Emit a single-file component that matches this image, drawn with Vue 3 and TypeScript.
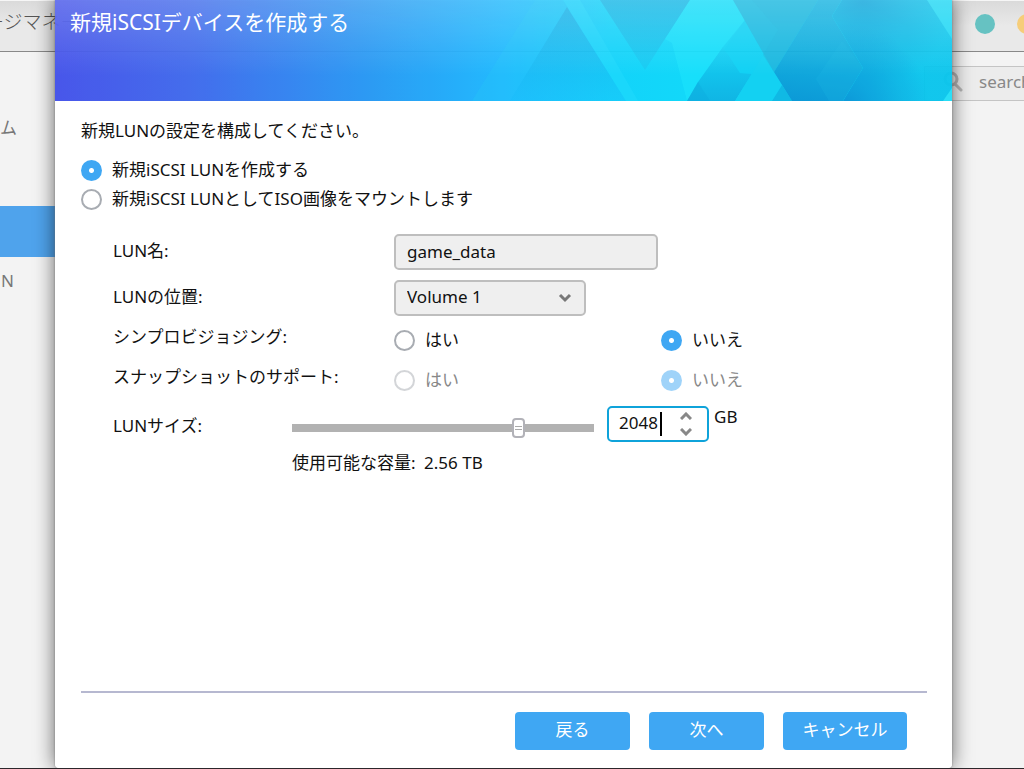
<script setup lang="ts">
import { ref } from 'vue'

const source = ref<'create' | 'mount'>('create')
const lunName = ref('game_data')
const location = ref('Volume 1')
const thin = ref<'yes' | 'no'>('no')
const snapshot = ref<'yes' | 'no'>('no')
const size = ref(2048)
const maxSize = 2684

function step(delta: number) {
  size.value = Math.min(maxSize, Math.max(1, Number(size.value) + delta))
}
</script>

<template>
  <div class="page">
    <div class="shell">
      <header class="titlebar">
        <span class="app-name">ージマネー</span>
        <span class="window-dots">
          <button type="button" class="dot teal" aria-label="最小化"></button>
          <button type="button" class="dot yellow" aria-label="最大化"></button>
        </span>
      </header>
      <div class="workspace">
        <nav class="sidebar">
          <a href="#" class="item">ム</a>
          <a href="#" class="item active" aria-label="iSCSI"></a>
          <a href="#" class="item latin">N</a>
        </nav>
        <div class="searchbar">
          <svg viewBox="0 0 20 22" class="magnifier" aria-hidden="true">
            <circle cx="8" cy="8" r="6" fill="none" stroke="#b5b5b5" stroke-width="3" />
            <path d="M12 13l6 6" stroke="#b5b5b5" stroke-width="3" stroke-linecap="round" />
          </svg>
          <input type="text" class="search" placeholder="search" aria-label="search" />
        </div>
      </div>
    </div>

    <section class="dialog" role="dialog" aria-labelledby="dialog-title">
      <header class="banner">
        <svg class="art" viewBox="0 0 897 101" preserveAspectRatio="none" aria-hidden="true">
          <defs>
            <linearGradient id="base" x1="0" x2="1" y1="0" y2="0">
              <stop offset="0" stop-color="#3f4eea" />
              <stop offset="0.15" stop-color="#3b66ec" />
              <stop offset="0.34" stop-color="#2394f3" />
              <stop offset="0.5" stop-color="#17b7ff" />
              <stop offset="0.62" stop-color="#08d2fb" />
              <stop offset="0.72" stop-color="#06d8fa" />
              <stop offset="1" stop-color="#05d4f4" />
            </linearGradient>
            <linearGradient id="shine" x1="0" x2="0" y1="0" y2="1">
              <stop offset="0" stop-color="#fff" stop-opacity="0.2" />
              <stop offset="0.75" stop-color="#fff" stop-opacity="0" />
            </linearGradient>
            <linearGradient id="peak" x1="0" x2="0" y1="0" y2="1">
              <stop offset="0" stop-color="#0fa9e2" stop-opacity="0.75" />
              <stop offset="1" stop-color="#10c0fa" stop-opacity="0.45" />
            </linearGradient>
            <linearGradient id="dip" x1="0" x2="0" y1="0" y2="1">
              <stop offset="0" stop-color="#0cb0e4" stop-opacity="0.85" />
              <stop offset="1" stop-color="#0cc4f0" stop-opacity="0.6" />
            </linearGradient>
            <linearGradient id="pool" x1="0" x2="0" y1="0" y2="1">
              <stop offset="0" stop-color="#08d0f4" />
              <stop offset="1" stop-color="#04b2e4" />
            </linearGradient>
            <linearGradient id="deep" gradientUnits="userSpaceOnUse" x1="760" x2="745" y1="0" y2="101">
              <stop offset="0" stop-color="#0cb2e2" />
              <stop offset="0.5" stop-color="#07addf" />
              <stop offset="1" stop-color="#0096d6" />
            </linearGradient>
            <radialGradient id="low" gradientUnits="userSpaceOnUse" cx="790" cy="108" r="85">
              <stop offset="0" stop-color="#0092d6" />
              <stop offset="1" stop-color="#0092d6" stop-opacity="0" />
            </radialGradient>
            <radialGradient id="high" gradientUnits="userSpaceOnUse" cx="808" cy="0" r="90">
              <stop offset="0" stop-color="#0098d6" stop-opacity="0.8" />
              <stop offset="1" stop-color="#0aa8dc" stop-opacity="0.2" />
            </radialGradient>
          </defs>
          <rect width="897" height="101" fill="url(#base)" />
          <path d="M480 0H508L512 7L455 101H417Z" fill="#1cc6fa" opacity="0.3" />
          <path d="M512 7L455 101H571Z" fill="url(#peak)" />
          <path d="M508 0H525L583 101H571Z" fill="#1cdcff" opacity="0.4" />
          <path d="M545 0L590 70L635 0Z" fill="url(#dip)" />
          <path d="M635 0H678L690 20L632 101L617 43L610 39Z" fill="#16e8ff" opacity="0.4" />
          <path d="M668 47L632 101H717L719 72L710 52L690 20Z" fill="#05ccf2" opacity="0.6" />
          <path d="M643 82L668 47L685 73L697 74L680 101H632Z" fill="url(#pool)" />
          <path d="M643 82L655 101H632Z" fill="#00a8df" opacity="0.4" />
          <path d="M710 52L680 101H717L727 85L719 72Z" fill="#08d0f2" />
          <path d="M717 101L727 85L737 101Z" fill="#04b6e4" />
          <path d="M678 0H763L719 72Z" fill="#10b9e2" />
          <path d="M697 0H763L719 72L708 55L723 30Z" fill="#10b4de" opacity="0.5" />
          <path d="M763 0H787L777 16L808 68L788 101H737L719 72Z" fill="url(#deep)" />
          <path d="M787 0H897V101H788L808 68L777 16Z" fill="#06cdf2" />
          <path d="M787 0H897V101H788L808 68L777 16Z" fill="url(#high)" />
          <path d="M787 0H897V101H788L808 68L777 16Z" fill="url(#low)" />
          <path d="M787 41L808 68L788 101H774L761 79Z" fill="#14b8e8" opacity="0.2" />
          <path d="M872 0H897V39Z" fill="#18d8f6" />
          <path d="M897 88V101H888Z" fill="#20dff8" />
          <rect width="897" height="101" fill="url(#shine)" />
        </svg>
        <h1 id="dialog-title">新規iSCSIデバイスを作成する</h1>
      </header>

      <form class="content" @submit.prevent>
        <p class="intro">新規LUNの設定を構成してください。</p>
        <div class="sources">
          <label class="choice"><input v-model="source" type="radio" name="source" value="create" />新規iSCSI LUNを作成する</label>
          <label class="choice"><input v-model="source" type="radio" name="source" value="mount" />新規iSCSI LUNとしてISO画像をマウントします</label>
        </div>

        <div class="fields">
          <div class="row">
            <label class="name" for="lun-name">LUN名:</label>
            <input id="lun-name" v-model="lunName" type="text" class="box" />
          </div>
          <div class="row location-row">
            <label class="name" for="lun-location">LUNの位置:</label>
            <span class="select-wrap">
              <select id="lun-location" v-model="location" class="box">
                <option>Volume 1</option>
              </select>
              <svg viewBox="0 0 14 10" class="chevron" aria-hidden="true">
                <path d="M2 2l5 5 5-5" fill="none" stroke="#777" stroke-width="3" />
              </svg>
            </span>
          </div>
          <div class="row options" role="radiogroup" aria-labelledby="thin-label">
            <span id="thin-label" class="name">シンプロビジョジング:</span>
            <label class="choice"><input v-model="thin" type="radio" name="thin" value="yes" />はい</label>
            <label class="choice"><input v-model="thin" type="radio" name="thin" value="no" />いいえ</label>
          </div>
          <div class="row options" role="radiogroup" aria-labelledby="snap-label">
            <span id="snap-label" class="name">スナップショットのサポート:</span>
            <label class="choice off"><input v-model="snapshot" type="radio" name="snapshot" value="yes" disabled />はい</label>
            <label class="choice off"><input v-model="snapshot" type="radio" name="snapshot" value="no" disabled />いいえ</label>
          </div>
          <div class="row size-row">
            <label class="name" for="lun-size">LUNサイズ:</label>
            <input v-model.number="size" type="range" class="slider" min="1" :max="maxSize" aria-label="LUNサイズ" />
            <div class="spinner">
              <input id="lun-size" v-model="size" type="text" inputmode="numeric" class="number" />
              <span class="caret"></span>
              <span class="steps">
                <button type="button" aria-label="増やす" @click="step(1)">
                  <svg viewBox="0 0 12 8"><path d="M1 7l5-5 5 5" fill="none" stroke="#888" stroke-width="3" /></svg>
                </button>
                <button type="button" aria-label="減らす" @click="step(-1)">
                  <svg viewBox="0 0 12 8"><path d="M1 1l5 5 5-5" fill="none" stroke="#888" stroke-width="3" /></svg>
                </button>
              </span>
            </div>
            <span class="unit">GB</span>
          </div>
          <p class="capacity">使用可能な容量:&ensp;2.56 TB</p>
        </div>
      </form>

      <footer class="actions">
        <button type="button">戻る</button>
        <button type="button">次へ</button>
        <button type="button" class="wide">キャンセル</button>
      </footer>
    </section>
  </div>
</template>

<style>
body {
  margin: 0;
  background: #f3f3f3;
}
</style>

<style scoped>
.page {
  box-sizing: border-box;
  display: grid;
  min-height: 100vh;
  overflow: hidden;
  border-bottom: 1px solid #2c272b;
  background: #f3f3f3;
  color: #111;
  font-family: "Noto Sans", "Noto Sans CJK JP", sans-serif;
  font-size: 17px;
  line-height: 24px;
}
.page * {
  box-sizing: border-box;
}
input,
select,
button {
  margin: 0;
  font: inherit;
  color: inherit;
}
.shell,
.dialog {
  grid-area: 1 / 1;
  min-width: 0;
}

/* window behind the dialog */
.shell {
  overflow: hidden;
}
.titlebar {
  display: flex;
  align-items: center;
  justify-content: space-between;
  height: 52px;
  padding-bottom: 4px;
  border-top: 1px solid #f6f6f6;
  border-bottom: 1px solid #888;
  background: linear-gradient(#dadada, #e9e9e9 50%);
}
.app-name {
  margin-left: -15px;
  padding-bottom: 4px;
  color: #555;
  font-size: 19px;
  font-weight: 300;
  white-space: nowrap;
}
.window-dots {
  display: flex;
  gap: 22px;
  margin-right: -13px;
}
.dot {
  width: 20px;
  height: 20px;
  padding: 0;
  border: 0;
  border-radius: 50%;
}
.teal {
  background: #66c2c2;
}
.yellow {
  background: #f6cd79;
}
.workspace {
  display: flex;
  justify-content: space-between;
}
.sidebar {
  width: 120px;
  padding-top: 52px;
}
.item {
  display: flex;
  align-items: center;
  height: 51px;
  padding-bottom: 4px;
  color: #777;
  text-decoration: none;
}
.item.active {
  margin-top: 51px;
  background: #4fa3ec;
}
.item.latin {
  padding-left: 1px;
}
.searchbar {
  display: flex;
  align-items: center;
  gap: 16px;
  width: 240px;
  height: 35px;
  margin: 14px -140px 0 0;
  padding: 0 0 4px 18px;
  border: 1px solid #c4c4c4;
  background: #ececec;
}
.magnifier {
  flex: none;
  width: 20px;
  height: 22px;
}
.search {
  min-width: 0;
  padding: 0;
  border: 0;
  background: transparent;
}
.search::placeholder {
  color: #888;
}

/* dialog */
.dialog {
  display: flex;
  flex-direction: column;
  margin: 0 72px 0 55px;
  z-index: 1;
  border-radius: 0 0 4px 4px;
  background: linear-gradient(transparent 101px, #fff 101px);
  box-shadow: 0 0 2px #777, 0 0 20px rgba(0, 0, 0, 0.6);
}
.banner {
  display: grid;
  height: 101px;
}
.art {
  grid-area: 1 / 1;
  width: 100%;
  height: 101px;
  opacity: 0.95;
}
.banner h1 {
  grid-area: 1 / 1;
  z-index: 1;
  margin: 0;
  padding: 8px 15px;
  color: #fff;
  font-size: 21px;
  font-weight: 400;
  line-height: 28px;
}
.content {
  flex: 1;
  padding: 18px 26px;
}
.intro,
.capacity {
  margin: 0;
}
.sources {
  display: grid;
  gap: 5px;
  margin: 15px 0 23px;
}
.choice {
  display: flex;
  align-items: center;
  gap: 10px;
}
.choice input {
  width: 21px;
  height: 21px;
  border: 2px solid #a8acb2;
  border-radius: 50%;
  background: #fff;
  appearance: none;
}
.choice input:checked {
  border: 0;
  background: radial-gradient(circle, #fff 2px, #3fa7f3 3px);
}
.choice.off {
  color: #888;
}
.choice.off input {
  opacity: 0.5;
}
.fields {
  padding-left: 32px;
}
.row {
  display: grid;
  grid-template-columns: 281px 1fr;
  align-items: center;
  margin-bottom: 10px;
}
.row .name {
  padding-bottom: 2px;
}
.location-row {
  margin-bottom: 4px;
}
.box {
  width: 264px;
  height: 36px;
  padding: 0 11px 2px;
  border: 2px solid #bebebe;
  border-radius: 5px;
  background: #efefef;
  appearance: none;
}
.select-wrap {
  display: grid;
  align-items: center;
  width: 192px;
}
.select-wrap .box {
  grid-area: 1 / 1;
  width: 100%;
}
.chevron {
  grid-area: 1 / 1;
  justify-self: end;
  width: 14px;
  height: 10px;
  margin-right: 14px;
  pointer-events: none;
}
.options {
  grid-template-columns: 281px 267px 1fr;
  height: 40px;
  margin: 0;
}
.row.options .name {
  padding-bottom: 6px;
}
.size-row {
  grid-template-columns: 179px 302px auto 1fr;
  height: 48px;
  margin: 0 0 3px;
}
.row.size-row .name {
  padding: 4px 0 0;
}
.slider {
  width: 100%;
  height: 20px;
  margin-top: 8px;
  background: linear-gradient(#b2b2b2, #b2b2b2) center / 100% 8px no-repeat;
  appearance: none;
}
.slider::-webkit-slider-thumb {
  width: 13px;
  height: 20px;
  border: 2px solid #b2b2b8;
  border-radius: 4px;
  background: linear-gradient(#aaa 1px, #fff 1px 3px, #aaa 3px) center / 7px 4px no-repeat #fff;
  appearance: none;
}
.spinner {
  display: flex;
  align-items: center;
  width: 102px;
  height: 36px;
  margin-left: 13px;
  padding-left: 10px;
  border: 2px solid #0fa3da;
  border-radius: 5px;
  background: #fff;
}
.number {
  width: 41px;
  padding: 0 0 2px;
  border: 0;
  outline: 0;
  background: transparent;
  caret-color: transparent;
}
.caret {
  width: 2px;
  height: 24px;
  background: #000;
}
.steps {
  display: grid;
  gap: 8px;
  margin-left: 18px;
}
.steps button {
  display: grid;
  width: 12px;
  height: 8px;
  padding: 0;
  border: 0;
  background: none;
}
.steps svg {
  width: 12px;
  height: 8px;
}
.unit {
  padding: 0 0 14px 5px;
}
.capacity {
  padding-left: 179px;
}
.actions {
  display: flex;
  justify-content: flex-end;
  gap: 19px;
  margin: 0 25px 0 26px;
  padding: 19px 20px 18px;
  border-top: 2px solid #b6b8d0;
}
.actions button {
  width: 115px;
  height: 38px;
  padding: 0 0 2px;
  border: 0;
  border-radius: 4px;
  background: #3fa7f3;
  color: #fff;
}
.actions .wide {
  width: 124px;
}
</style>
